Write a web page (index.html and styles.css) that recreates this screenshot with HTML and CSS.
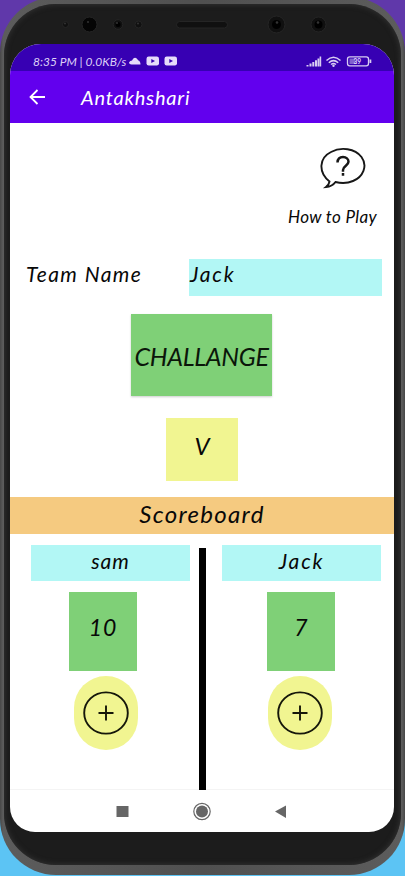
FILE: index.html
```html
<!DOCTYPE html>
<html lang="en">
<head>
<meta charset="utf-8">
<title>Antakhshari</title>
<link rel="stylesheet" href="styles.css">
</head>
<body>
<div class="phone">
<div class="bezel">
  <div class="sensors">
    <svg width="405" height="40" viewBox="0 0 405 40">
      <g fill="#101010" stroke="#252525">
        <circle cx="65.500" cy="24.500" r="3"/><circle cx="89.500" cy="24.500" r="7.500" fill="#050505"/>
        <circle cx="118" cy="24.500" r="4.800"/><circle cx="138.500" cy="24.500" r="3.500"/>
        <rect x="176.500" y="21.500" width="51" height="6.500" rx="3.200"/>
        <circle cx="276.500" cy="24.500" r="8.500"/><circle cx="318.500" cy="24.500" r="7.500"/>
      </g>
      <g fill="#000"><circle cx="276.500" cy="24.500" r="4.500"/><circle cx="318.500" cy="24.500" r="4"/><circle cx="118" cy="24.500" r="2.500"/></g>
      <g fill="#333"><circle cx="65" cy="23.500" r="1"/><circle cx="88" cy="22" r="1"/><circle cx="117" cy="23" r="1"/><circle cx="138" cy="23.500" r="1"/><circle cx="277" cy="22.500" r="1.300"/><circle cx="318" cy="22.500" r="1.300"/></g>
    </svg>
  </div>
  <div class="screen">
    <div class="status">
      <span class="clock">8:35 PM | 0.0KB/s</span>
      <svg class="notices" width="50" height="12" viewBox="0 0 50 12" fill="#e6dcfa">
        <path d="M2.500 9.500Q0 9.500 0 7.500 1 5.500 3 5.500 4.500 2 7 3 8.500 4 9 5.200 11.500 6 11.500 9.500Z"/>
        <rect x="17.500" y="1.500" width="12.500" height="9" rx="2.200"/><rect x="35.500" y="1.500" width="12.500" height="9" rx="2.200"/>
        <path d="M22.300 4v4l3.700-2zM40.300 4v4l3.700-2z" fill="#3700b3"/>
      </svg>
      <svg class="signals" width="67" height="14" viewBox="0 0 67 14" fill="#d8cdf2">
        <path d="M.5 11h2v1.500h-2zM3.500 9.500h2v3h-2zM6.300 8h2v4.500h-2zM9 6.200h2v6.300H9zM11.500 4.500h1.800v8h-1.800zM13.600 2.500h1.600v10h-1.600z"/>
        <g fill="none" stroke="#d8cdf2" stroke-width="1.500"><path d="M20.500 6.500q7-6.600 14 0M22.800 8.700q4.700-4.200 9.400 0M25 10.500q2.500-2 5 0"/></g>
        <circle cx="27.500" cy="11.800" r="1.200"/>
        <rect x="41.500" y="2.800" width="21" height="9" rx="2.200" fill="none" stroke="#d8cdf2" stroke-width="1.300"/>
        <rect x="43.500" y="4.500" width="6" height="5.500" fill="#8061ce"/><rect x="63.500" y="5.500" width="1.800" height="3.500"/>
        <text x="47.500" y="10" class="charge">39</text>
      </svg>
    </div>
    <header class="appbar">
      <svg width="17" height="16" viewBox="0 0 17 16" fill="none" stroke="#fff" stroke-width="1.800"><path d="M16 8H2M8.500 1 1.500 8l7 7"/></svg>
      <h1 class="title">Antakhshari</h1>
    </header>
    <main class="content">
      <div class="help">
        <svg width="48" height="44" viewBox="0 0 48 44" fill="none" stroke="#171717" stroke-width="1.900">
          <path d="M10.500 34.500C-1 25 0 11 12 5 22-.5 36 1.500 42.500 10c6.500 9 1.500 20-8.500 24-6 2.500-12 2.300-17.500 1-2 2.800-5 4.700-9.500 5 2-1.500 3.200-3.300 3.500-5.500Z"/>
          <path stroke-width="2.500" d="M18.500 15.500c.2-3.700 2.300-5.500 5.500-5.500s5.500 2 5.500 4.800c0 3.700-5.500 4.200-5.500 8.200v1.700M24 26v2.700"/>
        </svg>
        <span class="help-label">How to Play</span>
      </div>
      <div class="team"><span class="team-label">Team Name</span><span class="team-value">Jack</span></div>
      <button class="challenge"><span>CHALLANGE</span></button>
      <div class="letter">V</div>
      <h2 class="board-title">Scoreboard</h2>
      <div class="board">
        <section class="player">
          <div class="name sam">sam</div><div class="score ten">10</div>
          <div class="plus"><svg width="46" height="44" viewBox="0 0 46 44" fill="none" stroke="#15170a" stroke-width="1.900"><ellipse cx="23" cy="22" rx="21.800" ry="20.600"/><path d="M23 14.500v15M15.500 22h15"/></svg></div>
        </section>
        <div class="divider"></div>
        <section class="player second">
          <div class="name">Jack</div><div class="score">7</div>
          <div class="plus"><svg width="46" height="44" viewBox="0 0 46 44" fill="none" stroke="#15170a" stroke-width="1.900"><ellipse cx="23" cy="22" rx="21.800" ry="20.600"/><path d="M23 14.500v15M15.500 22h15"/></svg></div>
        </section>
      </div>
    </main>
    <nav class="nav">
      <svg width="384" height="42" viewBox="0 0 384 42" fill="#666">
        <rect x="106.500" y="16" width="12" height="11"/>
        <circle cx="192" cy="21.500" r="6"/><circle cx="192" cy="21.500" r="8.200" fill="none" stroke="#666" stroke-width="1.200"/>
        <path d="M265 21.500 276 15.500v12.500z"/>
      </svg>
    </nav>
  </div>
</div>
</div>
</body>
</html>
```
FILE: styles.css
```css
* { box-sizing: border-box; }
body { margin: 0; width: 405px; height: 876px; overflow: hidden; background: linear-gradient(#6038aa 0, #6038aa 50px, #5cc4f4 800px); font-family: Lato, "Open Sans", sans-serif; font-style: italic; color: #080808; }
.phone { width: 405px; height: 878px; margin-top: -3px; padding: 7px 4px 10px; border-radius: 56px; background: linear-gradient(90deg, #484848, #5c5c5c 3px, #505050 50%, #5c5c5c 402px, #484848); }
.bezel { height: 861px; border-radius: 52px; background: #1c1c1c; box-shadow: inset 0 0 5px 1px #303030; padding: 0 6px; display: flow-root; }
.sensors { height: 40px; margin-left: -10px; width: 405px; display: flow-root; }
.sensors svg { display: block; margin-top: -4px; }
.screen { width: 384px; height: 788px; overflow: hidden; border-radius: 31px 31px 25px 25px; background: #fff; display: flex; flex-direction: column; }
.status { height: 27px; flex: none; background: #3700b3; display: flex; align-items: center; padding: 7px 21px 0 23px; color: #ded2f7; }
.clock { font-size: 12px; width: 96px; letter-spacing: 0; white-space: nowrap; }
.signals { margin-left: auto; }
.charge { font: bold 6.500px Lato, sans-serif; fill: #e8dfff; }
.appbar { height: 52px; flex: none; background: #6200ee; display: flex; align-items: center; padding-left: 19px; color: #fff; }
.title { margin: 0 0 0 35px; font-size: 20px; line-height: 24px; font-weight: 400; letter-spacing: .8px; }
.content { height: 667px; flex: none; border-bottom: 1px solid #f4f4f4; }
.help { height: 136px; padding: 24px 17px 0 0; display: flex; flex-direction: column; align-items: flex-end; }
.help svg { margin-right: 10px; }
.help-label { margin-top: 15px; font-size: 17px; line-height: 22px; letter-spacing: .35px; }
.team { height: 37px; display: flex; padding: 0 12px 0 16px; font-size: 21px; line-height: 30px; }
.team-label { width: 163px; letter-spacing: 1.450px; }
.team-value { flex: 1; background: #b2f7f5; letter-spacing: 1.800px; padding-left: 1px; }
.challenge { display: flex; align-items: center; justify-content: center; width: 141px; height: 82px; margin: 18px 0 0 121px; padding: 2px 0 0; border: 0; background: #7fd077; box-shadow: 0 1px 2px #0003; font: italic 25px Lato, sans-serif; letter-spacing: -.3px; color: #0b160a; }
.letter { width: 72px; height: 63px; margin: 22px 0 0 156px; background: #f1f591; text-align: center; font-size: 24px; line-height: 56px; }
.board-title { height: 37px; margin: 16px 0 0; background: #f5ca80; text-align: center; font-size: 24px; line-height: 34px; font-weight: 400; letter-spacing: 1.300px; }
.board { height: 256px; display: flex; padding: 11px 13px 0 21px; }
.player { width: 159px; display: flex; flex-direction: column; align-items: center; }
.divider { width: 7px; margin: 3px 16px 0 9px; background: #000; }
.name { width: 159px; height: 36px; background: #b2f7f5; text-align: center; font-size: 21px; line-height: 31px; letter-spacing: 1.800px; }
.sam { letter-spacing: 1px; }
.score { width: 68px; height: 79px; margin: 11px 0 0 -15px; background: #7fd077; text-align: center; font-size: 23px; line-height: 71px; }
.ten { letter-spacing: 1px; }
.plus { width: 64px; height: 74px; margin: 5px 0 0 -10px; border-radius: 32px; background: #f1f591; display: flex; align-items: center; justify-content: center; }
.second .score { margin-left: -1px; }
.second .plus { margin-left: -3px; }
.nav { height: 42px; flex: none; }
.nav svg { display: block; }
```
